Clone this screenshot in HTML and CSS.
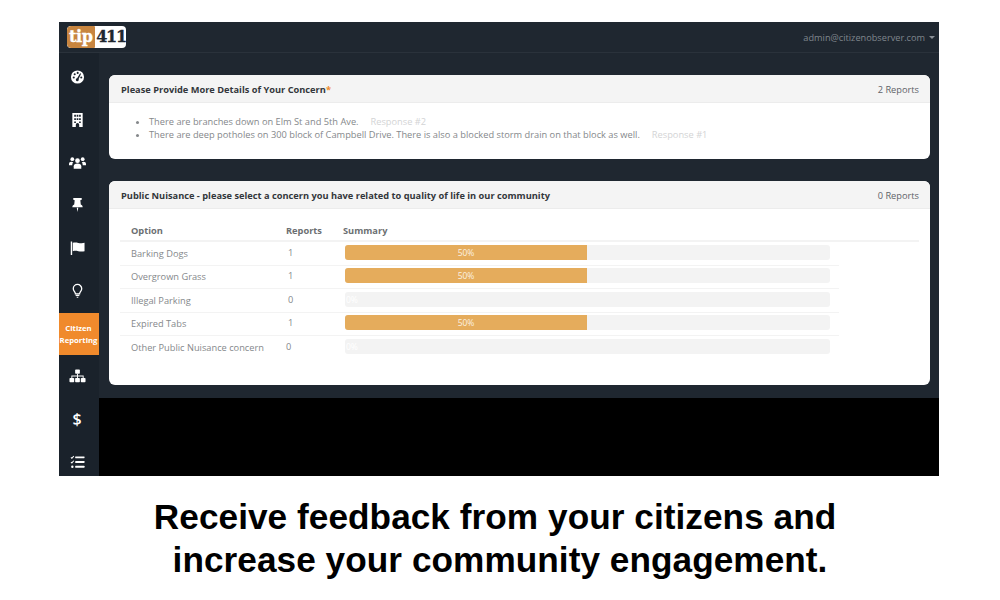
FILE: index.html
```html
<!DOCTYPE html>
<html lang="en">
<head>
<meta charset="utf-8">
<title>Citizen Reporting</title>
<link rel="stylesheet" href="styles.css">
</head>
<body>
<div class="app">
  <header class="topbar">
    <div class="logo"><span class="logo-tip">tip</span><span class="logo-num">411</span></div>
    <div class="user">admin@citizenobserver.com<span class="caret"></span></div>
  </header>
  <div class="body">
    <nav class="side">
      <div class="nav-item"><svg class="ico" viewBox="0 0 16 16"><circle cx="8" cy="8" r="7" fill="#fff"/><g fill="#1a222b"><circle cx="4" cy="8.500" r="1.100"/><circle cx="5" cy="5" r="1.100"/><circle cx="8.200" cy="3.600" r="1.100"/><circle cx="12" cy="8.500" r="1.100"/><path d="M10.800 4l1 .6-2.600 5.400a1.600 1.600 0 1 1-1.600-.8z"/></g></svg></div>
      <div class="nav-item"><svg class="ico" viewBox="0 0 16 16"><path fill="#fff" fill-rule="evenodd" d="M2.500 .5h11v15H9.800v-2.500a1.800 1.800 0 0 0-3.600 0v2.500H2.500zM4.500 2.500v2h1.800v-2zm2.600 0v2h1.800v-2zm2.600 0v2h1.800v-2zM4.500 6v2h1.800V6zm2.600 0v2h1.800V6zm2.600 0v2h1.800V6zM4.500 9.500v1.700h1.800V9.500zm5.200 0v1.700h1.800V9.500z"/></svg></div>
      <div class="nav-item"><svg class="ico ico-wide" viewBox="0 0 18 14"><g fill="#fff"><circle cx="9" cy="4.500" r="2.500"/><circle cx="3.500" cy="3" r="2"/><circle cx="14.500" cy="3" r="2"/><path d="M5 13v-2.500C5 8.500 6.500 7.500 9 7.500s4 1 4 3V13z"/><path d="M0 9.500V8c0-1.500 1-2.200 2.500-2.200.8 0 1.400.2 2 .6C3.600 7.200 3.500 8.300 3.500 9.500zM18 9.500V8c0-1.500-1-2.200-2.500-2.200-.8 0-1.400.2-2 .6.900.8 1 1.900 1 3.100z"/></g></svg></div>
      <div class="nav-item"><svg class="ico" viewBox="0 0 16 16"><path fill="#fff" d="M3.500 .5h9v2l-1.500.5.500 4.500c1.300.6 2 1.600 2 2.800H2.500c0-1.200.7-2.200 2-2.800L5 3l-1.500-.5zM7.200 10.800h1.600L8 15.500z"/></svg></div>
      <div class="nav-item"><svg class="ico" viewBox="0 0 16 16"><path fill="#fff" d="M.8 1h1.500v14.500H.8zM3 2.500c4-1.500 7 1.300 12.500 0v9C10 12.800 7 10 3 11.500z"/></svg></div>
      <div class="nav-item"><svg class="ico" viewBox="0 0 16 16"><path fill="none" stroke="#fff" stroke-width="1.400" d="M5.800 11c0-1.800-2.300-3-2.300-5.500a4.500 4.500 0 0 1 9 0c0 2.500-2.300 3.700-2.300 5.500z"/><path fill="#fff" d="M6 12h4v1.300H6zM6.800 14h2.400l-.6 1.200H7.400z"/></svg></div>
      <div class="nav-item nav-active">Citizen Reporting</div>
      <div class="nav-item"><svg class="ico ico-wide" viewBox="0 0 18 14"><g fill="#fff"><rect x="6.500" y="0" width="5" height="4.500" rx=".8"/><rect x="0.500" y="9" width="5" height="4.500" rx=".8"/><rect x="6.500" y="9" width="5" height="4.500" rx=".8"/><rect x="12.500" y="9" width="5" height="4.500" rx=".8"/><path d="M8.500 4.500h1v2h6V9h-1V7.500H9.500V9h-1V7.500H3.500V9h-1V6.500h6z"/></g></svg></div>
      <div class="nav-item nav-dollar">$</div>
      <div class="nav-item"><svg class="ico" viewBox="0 0 16 14"><g fill="#fff"><rect x="5.500" y="1" width="10" height="2" rx=".5"/><rect x="5.500" y="6" width="10" height="2" rx=".5"/><rect x="5.500" y="11" width="10" height="2" rx=".5"/><circle cx="2.500" cy="12" r="1.300"/></g><path fill="none" stroke="#fff" stroke-width="1.100" d="M1 2l1 1 2-2.300M1 7l1 1 2-2.300"/></svg></div>
    </nav>
    <div class="main-col">
      <main class="content">
        <section class="card card-first">
          <div class="card-head">
            <span class="card-title">Please Provide More Details of Your Concern<span class="req">*</span></span>
            <span class="card-count">2 Reports</span>
          </div>
          <ul class="answers">
            <li>There are branches down on Elm St and 5th Ave.<span class="resp">Response #2</span></li>
            <li>There are deep potholes on 300 block of Campbell Drive. There is also a blocked storm drain on that block as well.<span class="resp">Response #1</span></li>
          </ul>
        </section>
        <section class="card card-second">
          <div class="card-head">
            <span class="card-title">Public Nuisance - please select a concern you have related to quality of life in our community</span>
            <span class="card-count">0 Reports</span>
          </div>
          <div class="table">
            <div class="row row-head">
              <span class="c-opt">Option</span><span class="c-rep">Reports</span><span class="c-sum">Summary</span>
            </div>
            <div class="row">
              <span class="c-opt">Barking Dogs</span><span class="c-rep">1</span>
              <span class="bar"><span class="fill">50%</span></span>
            </div>
            <div class="row">
              <span class="c-opt">Overgrown Grass</span><span class="c-rep">1</span>
              <span class="bar"><span class="fill">50%</span></span>
            </div>
            <div class="row">
              <span class="c-opt">Illegal Parking</span><span class="c-rep">0</span>
              <span class="bar"><span class="zero">0%</span></span>
            </div>
            <div class="row">
              <span class="c-opt">Expired Tabs</span><span class="c-rep">1</span>
              <span class="bar"><span class="fill">50%</span></span>
            </div>
            <div class="row row-last">
              <span class="c-opt">Other Public Nuisance concern</span><span class="c-rep">0</span>
              <span class="bar"><span class="zero">0%</span></span>
            </div>
          </div>
        </section>
      </main>
      <div class="black"></div>
    </div>
  </div>
</div>
<p class="caption">Receive feedback from your citizens and&nbsp;<br>increase your community engagement.</p>
</body>
</html>
```
FILE: styles.css
```css
* { box-sizing: border-box; }
html, body { margin: 0; padding: 0; background: #fff; }
body { width: 1000px; height: 600px; padding-top: 22px; overflow: hidden; font-family: "Open Sans", "Liberation Sans", sans-serif; }

.app { width: 880px; height: 454px; margin-left: 59px; display: flex; flex-direction: column; background: #000; overflow: hidden; }

.topbar { height: 31px; flex: none; display: flex; align-items: center; justify-content: space-between; padding: 0 4px 0 8px; background: #1f2730; border-bottom: 1px solid #2a323b; }
.logo { display: flex; height: 22px; width: 59px; border-radius: 4px; overflow: hidden; background: #fff; font-family: "DejaVu Serif", serif; font-weight: 700; font-size: 16px; line-height: 21px; }
.logo-tip { width: 29px; padding-left: 2px; background: #c8853f; color: #fff; border-radius: 4px 1px 1px 4px; letter-spacing: -.4px; -webkit-text-stroke: .3px #fff; }
.logo-num { padding-left: 1.500px; color: #1f2730; letter-spacing: -1.200px; -webkit-text-stroke: .3px #1f2730; }
.user { display: flex; align-items: center; font-size: 9.200px; color: #7f868d; }
.caret { width: 0; height: 0; margin-left: 4px; border-left: 3px solid transparent; border-right: 3px solid transparent; border-top: 3px solid #8a9096; }

.body { flex: 1; display: flex; min-height: 0; }
.side { width: 40px; flex: none; padding-top: 3px; background: #1a222b; display: flex; flex-direction: column; }
.nav-item { width: 40px; height: 42.700px; flex: none; display: flex; align-items: center; justify-content: center; padding-right: 4px; }
.ico { width: 15px; height: 16px; display: block; }
.ico-wide { width: 17px; height: 14px; }
.nav-active { height: 42px; margin: 1px 0 0; padding: 0 1px 1px 0; background: #f08a2c; color: #fff; font-size: 7.700px; font-weight: 700; line-height: 12px; text-align: center; }
.nav-dollar { color: #fff; font-size: 16px; font-weight: 600; }

.main-col { flex: 1; display: flex; flex-direction: column; min-width: 0; }
.content { height: 345px; flex: none; padding: 22px 9px 0 10px; background: #1f2730; }
.black { flex: 1; background: #000; }

.card { background: #fff; border-radius: 6px; overflow: hidden; }
.card-first { height: 84px; margin-bottom: 22px; }
.card-second { height: 204px; }
.card-head { height: 28px; display: flex; align-items: center; justify-content: space-between; padding: 1px 11px 0 12px; background: #f4f4f4; border-bottom: 1px solid #ececec; font-size: 9.250px; }
.card-title { font-weight: 700; color: #33373b; }
.req { color: #f08a2c; }
.card-count { color: #5f6368; }

.answers { margin: 12px 0 0; padding: 0 0 0 40px; list-style: disc; font-size: 9.280px; line-height: 13px; color: #85888b; }
.resp { margin-left: 12px; color: #d3d4d5; }

.table { padding: 11px 11px 0 11px; }
.row { display: flex; align-items: center; height: 23.500px; font-size: 9.250px; color: #85888b; border-bottom: 1px solid #f3f3f3; margin-right: 80px; }
.row-head { height: 22px; margin-right: 0; font-weight: 700; color: #6c6f72; border-bottom: 2px solid #f3f3f3; }
.row-last { border-bottom: 0; }
.c-opt { width: 166px; flex: none; padding-left: 11px; white-space: nowrap; }
.c-rep { width: 57px; flex: none; padding: 0 0 2px 2px; }
.row-head .c-rep { padding: 0; }
.row-last .c-rep { padding-left: 0; }
.c-sum { flex: none; }
.bar { width: 485px; height: 15px; flex: none; margin: 0 0 2px 2px; background: #f3f3f3; border-radius: 3px; overflow: hidden; display: block; }
.fill { display: block; width: 242px; height: 15px; background: #e5ac5c; color: #fbf1e1; font-size: 8.500px; line-height: 15px; text-align: center; }
.zero { display: block; width: 14px; padding-left: 1px; color: #fff; font-size: 8.500px; line-height: 15px; }

.caption { margin: 19px 0 0; width: 1000px; text-align: center; font-family: "Liberation Sans", Arial, sans-serif; font-weight: 700; font-size: 35.200px; letter-spacing: .05px; line-height: 43px; color: #000; }
```
